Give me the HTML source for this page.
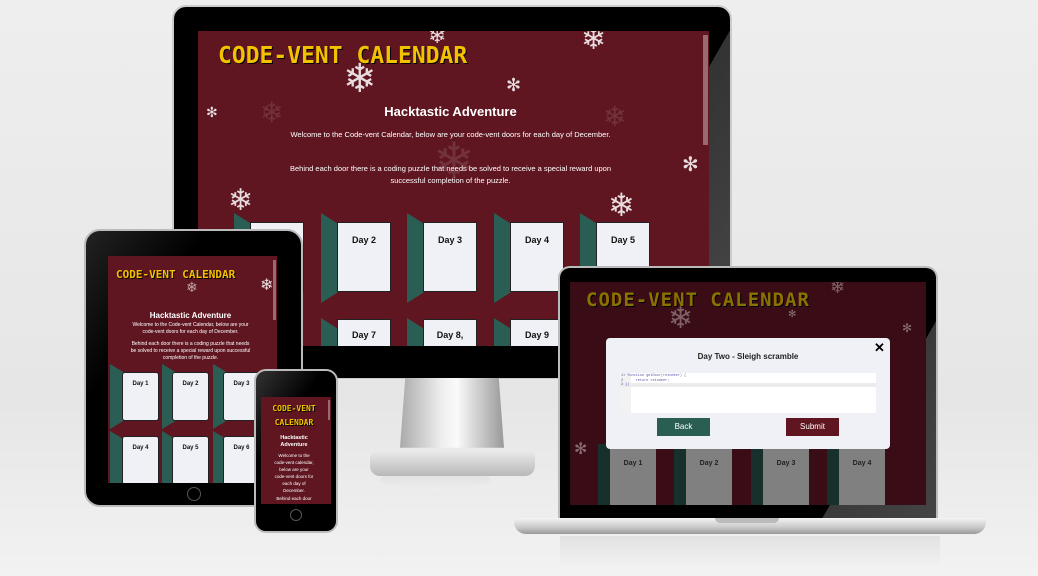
<!DOCTYPE html>
<html><head><meta charset="utf-8"><style>
*{margin:0;padding:0;box-sizing:border-box}
body{width:1038px;height:576px;overflow:hidden;position:relative;background:linear-gradient(#eeeeee,#e6e6e6 70%,#f2f2f2);font-family:"Liberation Sans",sans-serif}
.a{position:absolute}
.scr{background:#5f1621;overflow:hidden}
.t{font-family:"DejaVu Sans Mono","Liberation Mono",monospace;font-weight:bold;color:#f2c200;text-shadow:1px 1px 0 #000;white-space:nowrap}
.w{color:#fff;text-align:center;white-space:nowrap}
.door{position:absolute;background:#f0f1f6;color:#111;font-weight:bold;text-align:center;border:1px solid #222}
.flap{position:absolute;background:#2a5e54;clip-path:polygon(0 0,100% 12%,100% 88%,0 100%)}
.sf{position:absolute;color:rgba(255,255,255,.85);line-height:1}
.sd{position:absolute;color:rgba(255,255,255,.12);line-height:1}
</style></head><body>
<div class="a" style="left:380px;top:470px;width:110px;height:20px;background:linear-gradient(#ddd,#eee);border-radius:50%"></div>
<div class="a" style="left:560px;top:536px;width:380px;height:34px;background:linear-gradient(#e2e2e2,#f3f3f3)"></div>

<!-- MONITOR -->
<div class="a" style="left:172px;top:5px;width:560px;height:374px;background:linear-gradient(120deg,#000 0,#000 74%,#333 74%,#4a4a4a 100%);border-radius:14px 14px 4px 4px;border:2px solid #ccc"></div>
<div class="a" style="left:174px;top:340px;width:556px;height:38px;background:#000"></div>
<div class="a" style="left:400px;top:378px;width:104px;height:82px;background:linear-gradient(90deg,#aaa,#eee 40%,#fafafa 55%,#999);clip-path:polygon(5% 0,95% 0,100% 85%,0 85%)"></div>
<div class="a" style="left:370px;top:452px;width:165px;height:24px;background:linear-gradient(#e8e8e8,#b8b8b8);border-radius:6px 6px 10px 10px"></div>
<div class="a scr" style="left:198px;top:31px;width:511px;height:315px">
  <div class="a t" style="left:20px;top:12px;font-size:23px;letter-spacing:0px">CODE-VENT CALENDAR</div>
  <div class="a" style="left:505px;top:4px;width:5px;height:110px;background:#9a6a70"></div>
  <div class="sf" style="left:145px;top:28px;font-size:40px">❄</div>
  <div class="sf" style="left:383px;top:-6px;font-size:30px">❄</div>
  <div class="sf" style="left:308px;top:45px;font-size:18px">✻</div>
  <div class="sf" style="left:8px;top:74px;font-size:14px">✻</div>
  <div class="sf" style="left:484px;top:124px;font-size:20px">✻</div>
  <div class="sf" style="left:30px;top:155px;font-size:30px">❄</div>
  <div class="sf" style="left:410px;top:158px;font-size:32px">❄</div>
  <div class="sf" style="left:230px;top:-6px;font-size:22px">❄</div>
  <div class="sd" style="left:235px;top:105px;font-size:50px">❄</div>
  <div class="sd" style="left:62px;top:68px;font-size:28px">❄</div>
  <div class="sd" style="left:405px;top:72px;font-size:28px">❄</div>
  <div class="a w" style="left:0;width:505px;top:73px;font-size:13px;font-weight:bold">Hacktastic Adventure</div>
  <div class="a w" style="left:0;width:505px;top:99px;font-size:7.5px">Welcome to the Code-vent Calendar, below are your code-vent doors for each day of December.</div>
  <div class="a w" style="left:0;width:505px;top:132px;font-size:7.5px;line-height:12px">Behind each door there is a coding puzzle that needs be solved to receive a special reward upon<br>successful completion of the puzzle.</div>
  <div class="flap" style="left:36px;top:182px;width:17px;height:90px"></div><div class="door" style="left:52px;top:191px;width:54px;height:70px"></div>
  <div class="flap" style="left:123px;top:182px;width:17px;height:90px"></div><div class="door" style="left:139px;top:191px;width:54px;height:70px;font-size:9px;padding-top:12px">Day 2</div>
  <div class="flap" style="left:209px;top:182px;width:17px;height:90px"></div><div class="door" style="left:225px;top:191px;width:54px;height:70px;font-size:9px;padding-top:12px">Day 3</div>
  <div class="flap" style="left:296px;top:182px;width:17px;height:90px"></div><div class="door" style="left:312px;top:191px;width:54px;height:70px;font-size:9px;padding-top:12px">Day 4</div>
  <div class="flap" style="left:382px;top:182px;width:17px;height:90px"></div><div class="door" style="left:398px;top:191px;width:54px;height:70px;font-size:9px;padding-top:12px">Day 5</div>
  <div class="flap" style="left:123px;top:287px;width:17px;height:90px"></div><div class="door" style="left:139px;top:288px;width:54px;height:70px;font-size:9px;padding-top:10px">Day 7</div>
  <div class="flap" style="left:209px;top:287px;width:17px;height:90px"></div><div class="door" style="left:225px;top:288px;width:54px;height:70px;font-size:9px;padding-top:10px">Day 8,</div>
  <div class="flap" style="left:296px;top:287px;width:17px;height:90px"></div><div class="door" style="left:312px;top:288px;width:54px;height:70px;font-size:9px;padding-top:10px">Day 9</div>
</div>

<!-- TABLET -->
<div class="a" style="left:84px;top:229px;width:219px;height:278px;background:linear-gradient(125deg,#222,#000 30%,#000);border-radius:16px;border:2px solid #bbb"></div>
<div class="a" style="left:187px;top:487px;width:14px;height:14px;border:1px solid #555;border-radius:50%"></div>
<div class="a scr" style="left:108px;top:256px;width:169px;height:227px">
  <div class="a t" style="left:8px;top:12px;font-size:11px">CODE-VENT CALENDAR</div>
  <div class="a" style="left:165px;top:4px;width:3px;height:60px;background:#9a6a70"></div>
  <div class="sf" style="left:152px;top:22px;font-size:16px">❄</div>
  <div class="sf" style="left:78px;top:24px;font-size:14px;opacity:.7">❄</div>
  <div class="a w" style="left:0;width:165px;top:55px;font-size:8px;font-weight:bold">Hacktastic Adventure</div>
  <div class="a w" style="left:0;width:165px;top:66px;font-size:5px;line-height:7px">Welcome to the Code-vent Calendar, below are your<br>code-vent doors for each day of December.</div>
  <div class="a w" style="left:0;width:165px;top:85px;font-size:5px;line-height:7px">Behind each door there is a coding puzzle that needs<br>be solved to receive a special reward upon successful<br>completion of the puzzle.</div>
  <div class="flap" style="left:2px;top:108px;width:13px;height:65px"></div><div class="door" style="left:14px;top:116px;width:37px;height:49px;font-size:6px;padding-top:8px;border-radius:3px">Day 1</div>
  <div class="flap" style="left:54px;top:108px;width:13px;height:65px"></div><div class="door" style="left:64px;top:116px;width:37px;height:49px;font-size:6px;padding-top:8px;border-radius:3px">Day 2</div>
  <div class="flap" style="left:105px;top:108px;width:13px;height:65px"></div><div class="door" style="left:115px;top:116px;width:37px;height:49px;font-size:6px;padding-top:8px;border-radius:3px">Day 3</div>
  <div class="flap" style="left:2px;top:175px;width:13px;height:65px"></div><div class="door" style="left:14px;top:180px;width:37px;height:49px;font-size:6px;padding-top:8px;border-radius:3px">Day 4</div>
  <div class="flap" style="left:54px;top:175px;width:13px;height:65px"></div><div class="door" style="left:64px;top:180px;width:37px;height:49px;font-size:6px;padding-top:8px;border-radius:3px">Day 5</div>
  <div class="flap" style="left:105px;top:175px;width:13px;height:65px"></div><div class="door" style="left:115px;top:180px;width:37px;height:49px;font-size:6px;padding-top:8px;border-radius:3px">Day 6</div>
</div>

<!-- PHONE -->
<div class="a" style="left:254px;top:369px;width:84px;height:164px;background:linear-gradient(125deg,#333,#000 35%,#000);border-radius:12px;border:2px solid #bbb"></div>
<div class="a" style="left:290px;top:509px;width:12px;height:12px;border:1px solid #555;border-radius:50%"></div>
<div class="a scr" style="left:261px;top:397px;width:70px;height:107px">
  <div class="a t" style="left:0;width:66px;text-align:center;top:5px;font-size:8px;line-height:14px;white-space:normal">CODE-VENT<br>CALENDAR</div>
  <div class="a" style="left:67px;top:3px;width:2px;height:20px;background:#9a6a70"></div>
  <div class="a w" style="left:0;width:66px;top:38px;font-size:5.5px;font-weight:bold;line-height:7px">Hacktastic<br>Adventure</div>
  <div class="a w" style="left:0;width:66px;top:55px;font-size:4.5px;line-height:7px">Welcome to the<br>code-vent calendar,<br>below are your<br>code-vent doors for<br>each day of<br>December.</div>
  <div class="a w" style="left:0;width:66px;top:99px;font-size:4.5px">Behind each door</div>
</div>

<!-- LAPTOP -->
<div class="a" style="left:558px;top:266px;width:380px;height:254px;background:linear-gradient(120deg,#000,#000 78%,#3a3a3a 78%,#444);border-radius:12px 12px 0 0;border:2px solid #bbb;border-bottom:none"></div>
<div class="a" style="left:514px;top:518px;width:472px;height:16px;background:linear-gradient(#f4f4f4,#c8c8c8 60%,#999);border-radius:2px 2px 12px 12px"></div>
<div class="a" style="left:715px;top:518px;width:64px;height:5px;background:#bbb;border-radius:0 0 5px 5px"></div>
<div class="a" style="left:570px;top:282px;width:356px;height:223px;background:#3a0c15;overflow:hidden">
  <div class="a t" style="left:16px;top:7px;font-size:19px;color:#8a7200;letter-spacing:1px">CODE-VENT CALENDAR</div>
  <div class="sd" style="left:98px;top:22px;font-size:30px;color:rgba(255,255,255,.35)">❄</div>
  <div class="sd" style="left:260px;top:-4px;font-size:18px;color:rgba(255,255,255,.35)">❄</div>
  <div class="sd" style="left:218px;top:28px;font-size:10px;color:rgba(255,255,255,.4)">✻</div>
  <div class="sd" style="left:332px;top:40px;font-size:12px;color:rgba(255,255,255,.4)">✻</div>
  <div class="sd" style="left:4px;top:160px;font-size:16px;color:rgba(255,255,255,.4)">✻</div>
  <div class="a" style="left:28px;top:162px;width:12px;height:64px;background:#17302b"></div><div class="a" style="left:40px;top:167px;width:46px;height:60px;background:#808080;font-weight:bold;font-size:7px;text-align:center;padding-top:11px;color:#222">Day 1</div>
  <div class="a" style="left:104px;top:162px;width:12px;height:64px;background:#17302b"></div><div class="a" style="left:116px;top:167px;width:46px;height:60px;background:#808080;font-weight:bold;font-size:7px;text-align:center;padding-top:11px;color:#222">Day 2</div>
  <div class="a" style="left:181px;top:162px;width:12px;height:64px;background:#17302b"></div><div class="a" style="left:193px;top:167px;width:46px;height:60px;background:#808080;font-weight:bold;font-size:7px;text-align:center;padding-top:11px;color:#222">Day 3</div>
  <div class="a" style="left:257px;top:162px;width:12px;height:64px;background:#17302b"></div><div class="a" style="left:269px;top:167px;width:46px;height:60px;background:#808080;font-weight:bold;font-size:7px;text-align:center;padding-top:11px;color:#222">Day 4</div>
  <div class="a" style="left:36px;top:56px;width:284px;height:111px;background:#f0f1f6;border-radius:4px">
    <div class="a" style="left:268px;top:2px;font-size:13px;font-weight:bold;color:#000">✕</div>
    <div class="a" style="left:0;width:284px;top:14px;text-align:center;font-size:8px;font-weight:bold;color:#222">Day Two - Sleigh scramble</div>
    <div class="a" style="left:13px;top:35px;width:257px;height:40px;background:#fff">
      <div class="a" style="left:0;top:0;width:12px;height:40px;background:#f2f2f2"></div>
      <div class="a" style="left:0;top:10px;width:257px;height:4px;background:#ececec"></div>
      <div class="a" style="left:2px;top:1px;font-size:3.5px;line-height:4.5px;color:#55a;font-family:'Liberation Mono',monospace">1▾ function getDoor(reindeer) {<br>2&nbsp;&nbsp;&nbsp;&nbsp;&nbsp;&nbsp;return reindeer;<br>3 }|</div>
    </div>
    <div class="a" style="left:51px;top:80px;width:53px;height:18px;background:#2a5e54;color:#fff;font-size:8px;text-align:center;line-height:18px">Back</div>
    <div class="a" style="left:180px;top:80px;width:53px;height:18px;background:#5f1621;color:#fff;font-size:8px;text-align:center;line-height:18px">Submit</div>
  </div>
</div>
</body></html>
